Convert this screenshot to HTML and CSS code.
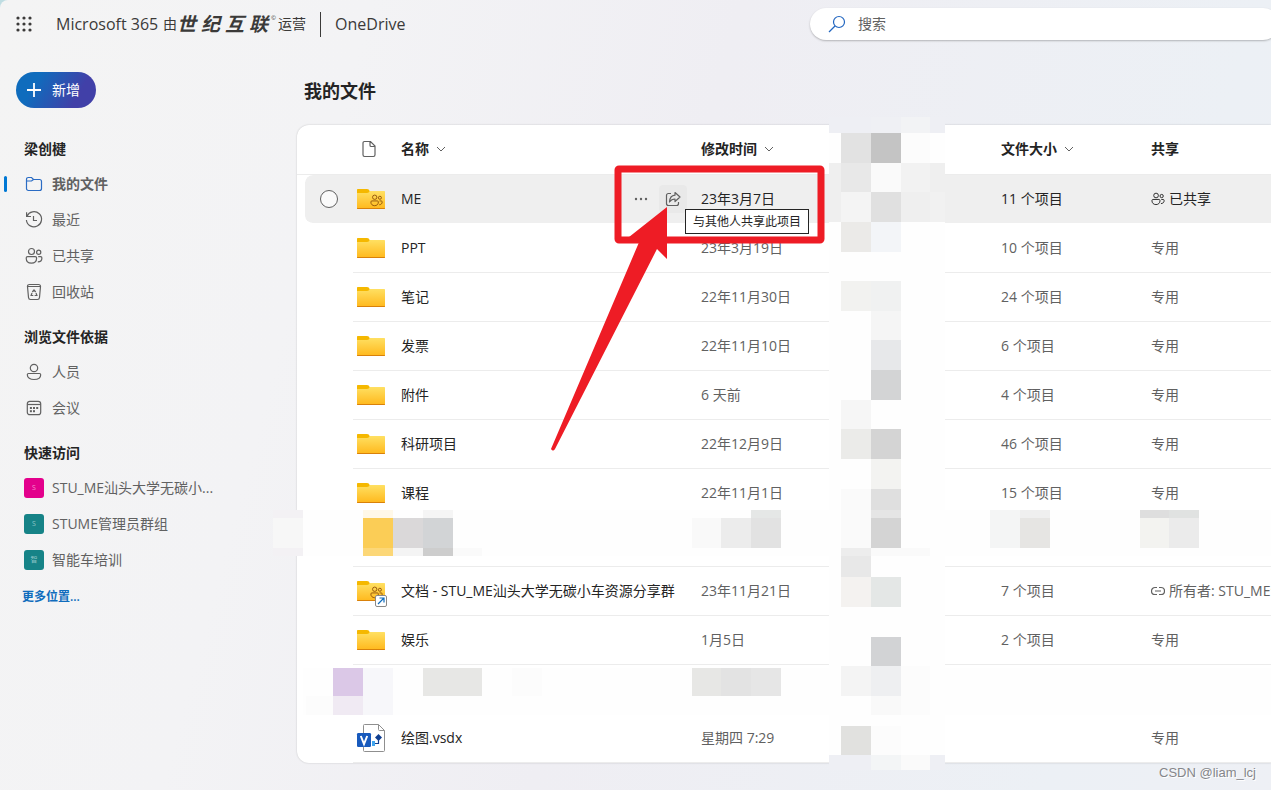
FILE: index.html
```html
<!DOCTYPE html>
<html lang="zh-CN">
<head>
<meta charset="utf-8">
<title>我的文件 - OneDrive</title>
<link rel="stylesheet" href="styles.css">
</head>
<body>
<svg class="defs" width="0" height="0" aria-hidden="true">
  <defs>
    <linearGradient id="folderFill" x1="0" y1="0" x2="0" y2="1">
      <stop offset="0" stop-color="#ffe062"/><stop offset="1" stop-color="#ffb81c"/>
    </linearGradient>
    <symbol id="folder" viewBox="0 0 28 28">
      <path d="M0 6H27C27.600 6 28 6.400 28 7V23C28 23.600 27.600 24 27 24H1C.4 24 0 23.600 0 23Z" fill="url(#folderFill)"/>
      <path d="M0 5C0 4.400.4 4 1 4H10C11.200 4 12.500 4.800 12.500 6C12.500 7.200 11.200 8 10 8H0Z" fill="#f5b800"/>
      <path d="M0 23H28C28 23.600 27.600 24 27 24H1C.4 24 0 23.600 0 23Z" fill="#d9810a"/>
    </symbol>
    <symbol id="people" viewBox="0 0 18 18">
      <g fill="none" stroke="currentColor" stroke-width="1.200">
        <circle cx="6.500" cy="4.500" r="3"/><circle cx="13.700" cy="5.200" r="2.100"/>
        <path d="M2.600 9.600H10.200C11 9.600 11.600 10.200 11.600 11C11.600 14.200 9.500 16.200 6.400 16.200S1.200 14.200 1.200 11C1.200 10.200 1.800 9.600 2.600 9.600Z"/>
        <path d="M13.200 9.600H15.600C16.400 9.600 16.900 10.200 16.900 11C16.900 13.300 15.300 14.900 12.800 14.900"/>
      </g>
    </symbol>
    <symbol id="chevron" viewBox="0 0 10 10">
      <path d="M1 3L5 7L9 3" fill="none" stroke="#616161"/>
    </symbol>
  </defs>
</svg>

<div class="page">
  <header class="topbar">
    <div class="brand">
      <button class="launcher" aria-label="应用启动器">
        <svg width="16" height="16" viewBox="0 0 16 16" fill="#3b3a39"><circle cx="2" cy="2" r="1.600"/><circle cx="8" cy="2" r="1.600"/><circle cx="14" cy="2" r="1.600"/><circle cx="2" cy="8" r="1.600"/><circle cx="8" cy="8" r="1.600"/><circle cx="14" cy="8" r="1.600"/><circle cx="2" cy="14" r="1.600"/><circle cx="8" cy="14" r="1.600"/><circle cx="14" cy="14" r="1.600"/></svg>
      </button>
      <span class="suite">Microsoft 365</span>
      <span class="operator"><span>由</span><span class="vianet"><b>世</b><b>纪</b><b>互</b><b>联</b></span><sup>©</sup><span>运营</span></span>
      <a class="app" href="#">OneDrive</a>
    </div>
    <label class="search">
      <svg width="18" height="18" viewBox="0 0 18 18" fill="none" stroke="#2266c0" stroke-width="1.200"><circle cx="11" cy="7" r="5.500"/><path d="M7 11L1 17"/></svg>
      <input type="search" placeholder="搜索" aria-label="搜索">
    </label>
  </header>

  <div class="body">
    <aside class="side">
      <button class="new"><svg width="14" height="14" viewBox="0 0 14 14" stroke="#fff" stroke-width="1.800"><path d="M7 0V14M0 7H14"/></svg>新增</button>
      <nav>
        <h2>梁创楗</h2>
        <a class="item active" href="#"><svg width="20" height="20" viewBox="0 0 20 20" fill="none" stroke="#2b6cc4" stroke-width="1.200"><path d="M2.500 5.500C2.500 4.100 3.300 3.500 4.300 3.500H7.500L9.500 5.500H15.500C16.900 5.500 17.500 6.400 17.500 7.500V14.500C17.500 15.800 16.700 16.500 15.500 16.500H4.500C3.200 16.500 2.500 15.700 2.500 14.500ZM2.500 7H7.500L9.500 5.500"/></svg>我的文件</a>
        <a class="item" href="#"><svg width="20" height="20" viewBox="0 0 20 20" fill="none" stroke="currentColor" stroke-width="1.200"><path d="M3 6.200A7.600 7.600 0 1 1 2.400 10M2.600 2.300V6.500H7M9.500 6V10.500H13"/></svg>最近</a>
        <a class="item" href="#"><svg class="small" width="18" height="18"><use href="#people"/></svg>已共享</a>
        <a class="item" href="#"><svg width="20" height="20" viewBox="0 0 20 20" fill="none" stroke="currentColor" stroke-width="1.200"><path d="M3.500 4.500C3.500 3 4.300 2.500 5.500 2.500H14.500C15.700 2.500 16.500 3 16.500 4.500H3.500L4.500 15.500C4.600 16.900 5.300 17.500 6.500 17.500H13.500C14.700 17.500 15.400 16.900 15.500 15.500L16.500 4.500"/><path d="M8.300 10L10 8L11.700 10M12 11L12.900 13.500H10.600M9.300 13.500H7.100L8 11" stroke-width="1.200"/></svg>回收站</a>
        <h2>浏览文件依据</h2>
        <a class="item" href="#"><svg width="20" height="20" viewBox="0 0 20 20" fill="none" stroke="currentColor" stroke-width="1.200"><circle cx="10" cy="6" r="3.700"/><path d="M4.500 11.500H15.500C16.200 11.500 16.700 12 16.700 12.700C16.700 15.700 13.800 17.500 10 17.500S3.300 15.700 3.300 12.700C3.300 12 3.800 11.500 4.500 11.500Z"/></svg>人员</a>
        <a class="item" href="#"><svg width="20" height="20" viewBox="0 0 20 20" fill="none" stroke="currentColor" stroke-width="1.200"><rect x="3.300" y="3.300" width="13.400" height="13.400" rx="2.500"/><path d="M3.300 6.500H16.700"/><g fill="currentColor" stroke="none"><rect x="9" y="9" width="2" height="2"/><rect x="12.200" y="9" width="2" height="2"/><rect x="5.900" y="9" width="2" height="2"/><rect x="5.900" y="12.200" width="2" height="2"/><rect x="9" y="12.200" width="2" height="2"/></g></svg>会议</a>
        <h2>快速访问</h2>
        <a class="item" href="#"><span class="tile pink">S</span>STU_ME汕头大学无碳小...</a>
        <a class="item" href="#"><span class="tile">S</span>STUME管理员群组</a>
        <a class="item" href="#"><span class="tile">智</span>智能车培训</a>
        <a class="more" href="#">更多位置...</a>
      </nav>
    </aside>

    <main class="main">
      <h1>我的文件</h1>
      <div class="card">
        <table>
          <colgroup><col class="c-sel"><col class="c-icon"><col class="c-name"><col class="c-meta"><col class="c-meta"><col class="c-meta"><col></colgroup>
          <thead>
            <tr>
              <th></th>
              <th><svg class="doc" width="16" height="18" viewBox="0 0 16 18" fill="none" stroke="#616161" stroke-width="1.200"><path d="M4 1.500H9.500L14 6V14.800C14 15.900 13.400 16.500 12.500 16.500H3.500C2.600 16.500 2 15.900 2 14.800V3.200C2 2.100 2.600 1.500 3.500 1.500ZM9 1.700V5.200C9 6 9.400 6.500 10.200 6.500H13.800"/></svg></th>
              <th><button>名称<svg width="10" height="10"><use href="#chevron"/></svg></button></th>
              <th><button>修改时间<svg width="10" height="10"><use href="#chevron"/></svg></button></th>
              <th></th>
              <th><button>文件大小<svg width="10" height="10"><use href="#chevron"/></svg></button></th>
              <th><button>共享</button></th>
            </tr>
          </thead>
          <tbody>
            <tr class="hover">
              <td class="sel"><input type="checkbox" aria-label="选择 ME"></td>
              <td><svg class="ico" width="28" height="28"><use href="#folder"/><use href="#people" x="13" y="9" width="13" height="13" color="#8a4b08"/></svg></td>
              <td><div class="namecell"><a href="#">ME</a>
                <span class="actions">
                  <button aria-label="更多操作"><svg width="14" height="4" viewBox="0 0 14 4" fill="#616161"><circle cx="2" cy="2" r="1.200"/><circle cx="7" cy="2" r="1.200"/><circle cx="12" cy="2" r="1.200"/></svg></button>
                  <span class="share"><button class="on" aria-label="共享"><svg width="16" height="16" viewBox="0 0 16 16" fill="none" stroke="#616161" stroke-width="1.200" stroke-linejoin="round"><path d="M6 2.500H3.500C2.200 2.500 1.500 3.300 1.500 4.500V12.500C1.500 13.800 2.300 14.500 3.500 14.500H11.500C12.800 14.500 13.500 13.700 13.500 12.500V11"/><path d="M10 1.500L15 6L10 10.500V8C7.500 8 6 8.800 4.500 11C4.700 7 6.800 4.500 10 4.200Z"/></svg></button><span class="tip" role="tooltip">与其他人共享此项目</span></span>
                </span></div></td>
              <td>23年3月7日</td><td></td><td>11 个项目</td>
              <td><span class="with"><svg width="14" height="14"><use href="#people"/></svg>已共享</span></td>
            </tr>
            <tr><td></td><td><svg class="ico" width="28" height="28"><use href="#folder"/></svg></td><td><a href="#">PPT</a></td><td>23年3月19日</td><td></td><td>10 个项目</td><td>专用</td></tr>
            <tr><td></td><td><svg class="ico" width="28" height="28"><use href="#folder"/></svg></td><td><a href="#">笔记</a></td><td>22年11月30日</td><td></td><td>24 个项目</td><td>专用</td></tr>
            <tr><td></td><td><svg class="ico" width="28" height="28"><use href="#folder"/></svg></td><td><a href="#">发票</a></td><td>22年11月10日</td><td></td><td>6 个项目</td><td>专用</td></tr>
            <tr><td></td><td><svg class="ico" width="28" height="28"><use href="#folder"/></svg></td><td><a href="#">附件</a></td><td>6 天前</td><td></td><td>4 个项目</td><td>专用</td></tr>
            <tr><td></td><td><svg class="ico" width="28" height="28"><use href="#folder"/></svg></td><td><a href="#">科研项目</a></td><td>22年12月9日</td><td></td><td>46 个项目</td><td>专用</td></tr>
            <tr><td></td><td><svg class="ico" width="28" height="28"><use href="#folder"/></svg></td><td><a href="#">课程</a></td><td>22年11月1日</td><td></td><td>15 个项目</td><td>专用</td></tr>
            <tr><td></td><td></td><td></td><td></td><td></td><td></td><td></td></tr>
            <tr><td></td><td><svg class="ico" width="28" height="28"><use href="#folder"/><use href="#people" x="13" y="9" width="13" height="13" color="#8a4b08"/><rect x="18.500" y="18.500" width="11" height="11" rx="1.500" fill="#fff" stroke="#8a8886"/><path d="M21 27L27 21M22.500 21H27V25.500" fill="none" stroke="#0f6cbd" stroke-width="1.200"/></svg></td><td><a href="#">文档 - STU_ME汕头大学无碳小车资源分享群</a></td><td>23年11月21日</td><td></td><td>7 个项目</td><td><span class="with"><svg width="14" height="14" viewBox="0 0 14 14" fill="none" stroke="currentColor" stroke-width="1.200"><path d="M6 3.500H4A3.500 3.500 0 0 0 4 10.500H6M8 3.500H10A3.500 3.500 0 0 1 10 10.500H8M4 7H10"/></svg>所有者: STU_ME汕</span></td></tr>
            <tr><td></td><td><svg class="ico" width="28" height="28"><use href="#folder"/></svg></td><td><a href="#">娱乐</a></td><td>1月5日</td><td></td><td>2 个项目</td><td>专用</td></tr>
            <tr><td></td><td></td><td></td><td></td><td></td><td></td><td></td></tr>
            <tr><td></td><td><svg class="ico" width="28" height="28" viewBox="0 0 28 28"><path d="M7.500.5H21.500L27.500 6.500V26.500C27.500 27.200 27.200 27.500 26.500 27.500H7.500C6.800 27.500 6.500 27.200 6.500 26.500V1.500C6.500.8 6.800.5 7.500.5ZM21.500.5V5.500C21.500 6.200 21.800 6.500 22.500 6.500H27.500" fill="#fff" stroke="#8f8f8f"/><path d="M16.500 19.500H21.500V14" fill="none" stroke="#103f91" stroke-width="1.200"/><path d="M21.500 10L25 13.500L21.500 17L18 13.500Z" fill="#103f91"/><rect x="15" y="17" width="3" height="5" fill="#41a5ee"/><rect y="9" width="14" height="14" rx="1.200" fill="#185abd"/><path d="M3.800 12L7 20L10.200 12" fill="none" stroke="#fff" stroke-width="2"/></svg></td><td><a href="#">绘图.vsdx</a></td><td>星期四 7:29</td><td></td><td></td><td>专用</td></tr>
          </tbody>
        </table>
      </div>
    </main>
  </div>

  <svg class="overlay" width="1271" height="790" viewBox="0 0 1271 790" aria-hidden="true">
    <g shape-rendering="crispEdges">
      <path fill="#eeeff4" d="M829 117H945V133H829ZM829 755H945V770H829Z"/>
      <path fill="#fefefe" d="M829 133H945V755H829ZM303 510H1271V556H303ZM303 668H1271V715H303Z"/>
      <path fill="#efefef" d="M829 163H945V222H829Z"/>
      <path fill="#eff0f4" d="M871 117H901V133H871Z"/><path fill="#f2f3f5" d="M901 117H930V133H901Z"/>
      <path fill="#e2e2e2" d="M841 133H871V163H841Z"/><path fill="#c4c4c4" d="M871 133H901V163H871Z"/><path fill="#fcfcfc" d="M901 133H930V163H901Z"/>
      <path fill="#e8e8e8" d="M841 163H871V192H841Z"/><path fill="#fafafa" d="M871 163H901V192H871Z"/><path fill="#f2f2f2" d="M901 163H930V192H901Z"/>
      <path fill="#f4f4f4" d="M841 192H871V222H841Z"/><path fill="#e0e0e0" d="M871 192H901V222H871Z"/><path fill="#f1f1f1" d="M930 192H945V222H930Z"/>
      <path fill="#ebeae8" d="M841 222H871V252H841Z"/><path fill="#f3f5f8" d="M871 222H901V252H871Z"/>
      <path fill="#f2f2f0" d="M841 281H871V311H841Z"/><path fill="#f0f1f1" d="M871 281H901V311H871Z"/>
      <path fill="#f5f5f5" d="M871 311H901V340H871Z"/><path fill="#e7e8ea" d="M871 340H901V370H871Z"/><path fill="#d3d4d5" d="M871 370H901V400H871Z"/>
      <path fill="#f6f6f6" d="M841 400H871V429H841Z"/><path fill="#ebebe9" d="M841 429H871V459H841Z"/><path fill="#d4d4d4" d="M871 429H901V459H871Z"/>
      <path fill="#f3f3f1" d="M871 459H901V489H871Z"/><path fill="#fafafa" d="M841 489H871V548H841Z"/><path fill="#dfdfdf" d="M871 489H901V510H871Z"/>
      <path fill="#e5e5e5" d="M871 510H901V518H871Z"/><path fill="#d4d4d4" d="M871 518H901V548H871Z"/>
      <path fill="#ededed" d="M841 548H871V556H841Z"/><path fill="#fafafa" d="M871 548H930V556H871Z"/><path fill="#e8e8e8" d="M841 556H871V577H841Z"/>
      <path fill="#f4f2f0" d="M841 577H871V607H841Z"/><path fill="#e4e7e6" d="M871 577H901V607H871Z"/><path fill="#d2d3d5" d="M871 637H901V666H871Z"/>
      <path fill="#f4f4f4" d="M841 666H871V696H841Z"/><path fill="#eeeff1" d="M871 666H901V696H871Z"/><path fill="#fcfcfc" d="M901 666H930V715H901Z"/><path fill="#f9f9f9" d="M871 696H901V715H871Z"/>
      <path fill="#e1e1df" d="M841 726H871V755H841Z"/><path fill="#fcfcfc" d="M871 726H901V755H871Z"/><path fill="#f3f5f6" d="M871 755H901V770H871Z"/><path fill="#fafafa" d="M901 755H930V770H901Z"/>
      <path fill="#f3f1f4" d="M273 510H303V556H273Z"/><path fill="#f7f7f7" d="M273 518H303V548H273Z"/>
      <path fill="#fff8e8" d="M363 510H393V518H363Z"/><path fill="#fbcd56" d="M363 518H393V548H363Z"/><path fill="#fcd777" d="M363 548H393V556H363Z"/>
      <path fill="#dad8d9" d="M393 518H423V548H393Z"/><path fill="#f4f4f4" d="M393 548H423V556H393Z"/>
      <path fill="#f5f5f5" d="M423 510H453V518H423Z"/><path fill="#d2d4d6" d="M423 518H453V548H423Z"/><path fill="#cdcdcd" d="M423 548H453V556H423Z"/><path fill="#fafafa" d="M453 548H482V556H453Z"/>
      <path fill="#f9f9f9" d="M692 518H721V548H692Z"/><path fill="#ececec" d="M721 518H751V548H721Z"/><path fill="#e5e7e6" d="M751 510H781V518H751Z"/><path fill="#e2e2e2" d="M751 518H781V548H751Z"/>
      <path fill="#f4f5f5" d="M990 510H1020V548H990Z"/><path fill="#efefef" d="M1020 510H1050V518H1020Z"/><path fill="#e6e5e3" d="M1020 518H1050V548H1020Z"/>
      <path fill="#dedede" d="M1140 510H1169V518H1140Z"/><path fill="#f3f3f0" d="M1140 518H1169V548H1140Z"/><path fill="#e0e2e1" d="M1169 510H1199V518H1169Z"/><path fill="#ebebeb" d="M1169 518H1199V548H1169Z"/>
      <path fill="#dbc8e7" d="M333 668H363V696H333Z"/><path fill="#f0eaf3" d="M333 696H363V715H333Z"/><path fill="#f7f7fa" d="M363 668H393V715H363Z"/><path fill="#fcfcfc" d="M306 696H333V715H306ZM512 668H542V696H512Z"/>
      <path fill="#e7e7e5" d="M423 668H482V696H423ZM692 668H721V696H692Z"/><path fill="#e3e3e3" d="M721 668H751V696H721Z"/><path fill="#e6e6e6" d="M751 668H781V696H751Z"/>
    </g>
    <rect x="618" y="169" width="203" height="71" rx="1" fill="none" stroke="#ee1c25" stroke-width="7" stroke-linejoin="round"/>
    <path d="M667 207V259L657 249L555 449Q553 452 551 449L640 240L624 241Z" fill="#ee1c25"/>
  </svg>
  <span class="watermark">CSDN @liam_lcj</span>
</div>
</body>
</html>
```

FILE: styles.css
```css
* { box-sizing: border-box; }
html { background: #bfdde2; }
body {
  margin: 0;
  overflow: hidden;
  font-family: "Open Sans", "Noto Sans CJK SC", sans-serif;
  font-size: 14px;
  line-height: 20px;
  color: #242424;
}
a { color: inherit; text-decoration: none; }
button, input { font: inherit; color: inherit; }
button { border: 0; padding: 0; background: none; }
svg { display: block; flex: none; }
.defs { position: absolute; }

.page {
  position: relative;
  min-height: 100vh;
  overflow: hidden;
  border-top-left-radius: 8px;
  background: linear-gradient(105deg, #f4f4f4 0%, #f3f3f5 25%, #efeef3 50%, #ecf0f5 85%, #eef0f5 100%);
}

.topbar { display: grid; grid-template-columns: 809px 1fr; align-items: center; height: 48px; }
.brand { display: flex; align-items: center; padding-left: 16px; color: #3b3a39; }
.launcher { margin-right: 24px; }
.suite, .app { font-size: 16px; font-weight: 500; }
.suite { width: 107px; white-space: nowrap; }
.operator { display: flex; align-items: center; }
.vianet { display: flex; gap: 5px; font-size: 19px; font-style: italic; }
.operator sup { align-self: flex-start; width: 10px; padding-left: 3px; font-size: 6px; line-height: 8px; }
.app { margin-left: 14px; padding-left: 14px; border-left: 1px solid #3b3a39; line-height: 25px; }
.search {
  display: flex;
  align-items: center;
  gap: 12px;
  height: 32px;
  margin: 0 -8px 0 1px;
  padding-left: 18px;
  border-radius: 16px;
  background: #fff;
  box-shadow: 0 1px 2px rgba(0, 0, 0, .25);
}
.search input { flex: 1; min-width: 0; padding: 0; border: 0; outline: 0; background: none; }
.search input::placeholder { color: #616161; opacity: 1; }

.body { display: grid; grid-template-columns: 297px minmax(0, 1fr); }
.side { padding-top: 24px; }
.new {
  display: flex;
  align-items: center;
  gap: 11px;
  height: 36px;
  margin-left: 16px;
  padding: 0 16px 0 11px;
  border-radius: 18px;
  color: #fff;
  background: linear-gradient(120deg, #0f6cbd 25%, #4140a8 75%);
}
.side nav { padding: 14px 0 0; }
.side h2 { margin: 0; padding: 17px 24px 7px; font-size: 14px; line-height: 20px; font-weight: 700; }
.item { display: flex; align-items: center; gap: 8px; height: 36px; padding-left: 24px; color: #616161; white-space: nowrap; }
.item .small { margin: 0 1px; }
.active { font-weight: 700; padding-left: 4px; }
.active::before { content: ""; width: 3px; height: 16px; margin-right: 9px; border-radius: 2px; background: #0078d4; }
.tile { width: 20px; height: 20px; border-radius: 3px; background: #168387; color: #8cc4c6; font-size: 7px; line-height: 20px; text-align: center; }
.pink { background: #e3008c; color: #f58fcd; }
.more { display: block; padding: 9px 22px; color: #0f6cbd; font-size: 12px; font-weight: 600; }

.main { padding-top: 30px; }
h1 { margin: 0 0 21px; padding-left: 7px; font-size: 18px; line-height: 26px; font-weight: 700; }
.card { overflow: hidden; border-radius: 12px 0 0 12px; background: #fff; box-shadow: 0 0 2px rgba(0, 0, 0, .2); }
table { width: 100%; table-layout: fixed; border-collapse: separate; border-spacing: 0; }
.c-sel { width: 56px; }
.c-icon { width: 48px; }
.c-name { width: 300px; }
.c-meta { width: 150px; }
th { height: 50px; padding: 0 0 2px; border-bottom: 1px solid #ececec; text-align: left; font-weight: 700; }
th button { display: flex; align-items: center; gap: 7px; font-weight: 700; }
.doc { margin-left: 8px; }
td { height: 49px; padding: 0; border-bottom: 1px solid #ececec; color: #616161; white-space: nowrap; }
td:first-child { border-bottom-color: transparent; }
td:nth-child(3) { color: #242424; }
.ico { margin-left: 4px; overflow: visible; }
.hover td { border-bottom-color: #fff; background: #efefef; background-clip: padding-box; color: #242424; }
.hover .sel { border-left: 8px solid #fff; border-radius: 16px 0 0 16px / 8px 0 0 8px; }
.sel input { appearance: none; display: block; width: 18px; height: 18px; margin: 0 0 0 15px; border: 1px solid #616161; border-radius: 9px; background: #fafafa; }
.namecell { display: flex; align-items: center; justify-content: space-between; padding-right: 14px; }
.actions { display: flex; gap: 4px; }
.actions button { display: grid; place-items: center; width: 28px; height: 28px; border-radius: 4px; }
.actions .on { background: #e9e9e9; }
.share { position: relative; }
.tip { position: absolute; z-index: 2; left: 26px; top: 24px; padding: 2px 7px 1px; border: 1px solid #242424; background: #fff; font-size: 12px; line-height: 20px; }
.with { display: flex; align-items: center; gap: 4px; }

.overlay { position: absolute; left: 0; top: 0; pointer-events: none; }
.watermark { position: absolute; right: 15px; bottom: 7px; font-family: "Liberation Sans", sans-serif; font-size: 13px; color: #85868a; text-shadow: 1px 1px 0 #fff; }
```
